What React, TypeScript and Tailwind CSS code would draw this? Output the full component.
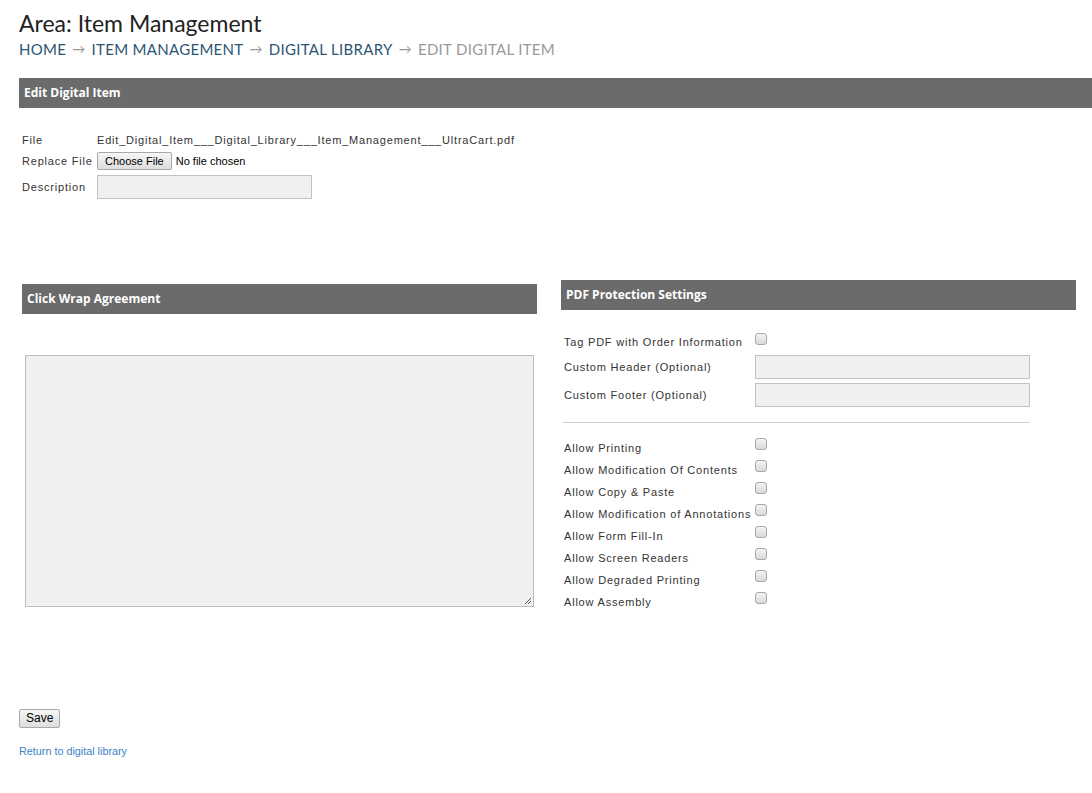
import React from "react";

const Check = () => (
  <span className="inline-block w-[12px] h-[12px] rounded-[3px] border border-[#a8a8a8] bg-gradient-to-b from-[#f4f4f4] to-[#dadada]" />
);

export default function App() {
  const allow = [
    "Allow Printing",
    "Allow Modification Of Contents",
    "Allow Copy & Paste",
    "Allow Modification of Annotations",
    "Allow Form Fill-In",
    "Allow Screen Readers",
    "Allow Degraded Printing",
    "Allow Assembly",
  ];
  const label = "font-['Liberation_Sans',Arial,sans-serif] text-[11px] tracking-[0.8px] text-[#333]";
  return (
    <div className="min-h-[793px] bg-white pl-[19px] pt-[8px] font-['Liberation_Sans',Arial,sans-serif]">
      <h1 className="font-['Lato',sans-serif] text-[23px] leading-[30px] text-[#222]">Area: Item Management</h1>
      <div className="mt-[2px] font-['Lato',sans-serif] text-[15px] leading-[18px] tracking-[0.3px] uppercase flex items-center">
        <span className="text-[#2d5573]">Home</span>
        <span className="text-[#999] text-[13px] mx-[6px]">→</span>
        <span className="text-[#2d5573]">Item Management</span>
        <span className="text-[#999] text-[13px] mx-[6px]">→</span>
        <span className="text-[#2d5573]">Digital Library</span>
        <span className="text-[#999] text-[13px] mx-[6px]">→</span>
        <span className="text-[#999]">Edit Digital Item</span>
      </div>
      <div className="mt-[20px] h-[30px] bg-[#6b6b6b] flex items-center pl-[5px]">
        <span className="font-['Open_Sans',sans-serif] font-bold text-[12px] text-white">Edit Digital Item</span>
      </div>

      <div className="pl-[3px] mt-[24px] flex flex-col">
        <div className={`flex items-center h-[16px] ${label}`}>
          <span className="w-[75px]">File</span>
          <span>Edit_Digital_Item___Digital_Library___Item_Management___UltraCart.pdf</span>
        </div>
        <div className={`flex items-center h-[20px] mt-[3px] ${label}`}>
          <span className="w-[75px]">Replace File</span>
          <span className="h-[18px] px-[7px] flex items-center border border-[#a9a9a9] rounded-[2px] bg-gradient-to-b from-[#f6f6f6] to-[#dedede] text-[11px] tracking-normal text-black">Choose File</span>
          <span className="ml-[4px] text-[11px] tracking-normal text-black">No file chosen</span>
        </div>
        <div className={`flex items-center mt-[4px] ${label}`}>
          <span className="w-[75px]">Description</span>
          <span className="w-[215px] h-[24px] border border-[#c2c2c2] bg-[#f0f0f0]" />
        </div>
      </div>

      <div className="flex mt-[81px]">
        <div className="ml-[3px] w-[515px] mt-[4px]">
          <div className="h-[30px] bg-[#6b6b6b] flex items-center pl-[5px]">
            <span className="font-['Open_Sans',sans-serif] font-bold text-[12px] text-white">Click Wrap Agreement</span>
          </div>
          <div className="ml-[3px] mt-[41px] w-[509px] h-[252px] border border-[#bdbdbd] bg-[#f0f0f0] relative">
            <svg className="absolute right-[1px] bottom-[1px]" width="8" height="8" viewBox="0 0 8 8">
              <path d="M7 1 L1 7 M7 4 L4 7" stroke="#555" strokeWidth="1" />
            </svg>
          </div>
        </div>
        <div className="ml-[24px] w-[515px]">
          <div className="h-[30px] bg-[#6b6b6b] flex items-center pl-[5px]">
            <span className="font-['Open_Sans',sans-serif] font-bold text-[12px] text-white">PDF Protection Settings</span>
          </div>
          <div className="pl-[3px] mt-[24px]">
            <div className={`flex items-center h-[16px] ${label}`}>
              <span className="w-[191px]">Tag PDF with Order Information</span>
              <span className="-mt-[1px]"><Check /></span>
            </div>
            <div className={`flex items-center mt-[5px] ${label}`}>
              <span className="w-[191px]">Custom Header (Optional)</span>
              <span className="w-[275px] h-[24px] border border-[#c2c2c2] bg-[#f0f0f0]" />
            </div>
            <div className={`flex items-center mt-[4px] ${label}`}>
              <span className="w-[191px]">Custom Footer (Optional)</span>
              <span className="w-[275px] h-[24px] border border-[#c2c2c2] bg-[#f0f0f0]" />
            </div>
            <div className="mt-[15px] w-[467px] -ml-[1px] border-t border-[#d0d0d0]" />
            <div className="mt-[14px] flex flex-col">
              {allow.map((a) => (
                <div key={a} className={`flex items-center h-[22px] ${label}`}>
                  <span className="w-[191px]">{a}</span>
                  <span className="-mt-[4px]"><Check /></span>
                </div>
              ))}
            </div>
          </div>
        </div>
      </div>

      <div className="mt-[92px]">
        <span className="inline-flex items-center h-[19px] px-[6px] border border-[#a9a9a9] rounded-[2px] bg-gradient-to-b from-[#f6f6f6] to-[#dedede] text-[12px] text-black">Save</span>
      </div>
      <div className="mt-[14px] text-[10.8px] text-[#3b82c4] font-['Liberation_Sans',Arial,sans-serif]">Return to digital library</div>
    </div>
  );
}
